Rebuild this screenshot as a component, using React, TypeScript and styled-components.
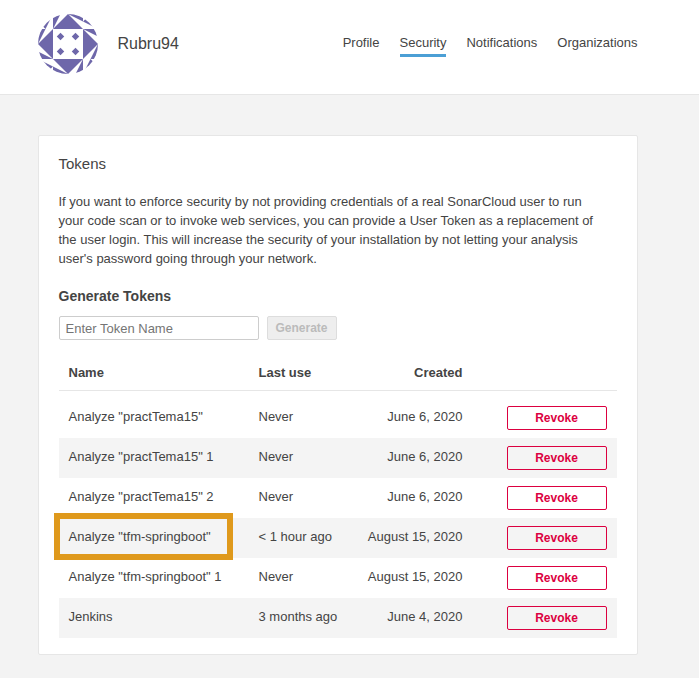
import React from "react";
import styled, { createGlobalStyle } from "styled-components";

const GlobalStyle = createGlobalStyle`
  *, *::before, *::after { box-sizing: border-box; }
  body {
    margin: 0;
    min-height: 100vh;
    background: #f3f3f3;
    color: #444;
    font: 13px/19px "Liberation Sans", Arial, sans-serif;
  }
`;

const Header = styled.header`
  display: flex;
  align-items: flex-start;
  height: 95px;
  padding: 14px 61.5px 0 37.5px;
  background: #fff;
  border-bottom: 1px solid #e6e6e6;
`;

const AvatarSvg = styled.svg`
  display: block;
  width: 60px;
  height: 60px;
  margin-left: 0.5px;
  margin-right: -0.5px;
  border-radius: 50%;
`;

const UserName = styled.h1`
  margin: 18px 0 0 20px;
  font-size: 16px;
  line-height: 24px;
  font-weight: 400;
`;

const Nav = styled.nav`
  display: flex;
  gap: 20px;
  margin: 20px 0 0 auto;
`;

const NavItem = styled.a<{ $active?: boolean }>`
  height: 23px;
  line-height: 17px;
  border-bottom: 3px solid ${(p) => (p.$active ? "#4b9fd5" : "transparent")};
`;

const Card = styled.main`
  width: 600px;
  height: 520px;
  margin: 40px 0 0 37.5px;
  padding: 18px 20px 0;
  background: #fff;
  border: 1px solid #e6e6e6;
  border-radius: 2px;
`;

const Title = styled.h2`
  margin: 0;
  font-size: 15px;
  line-height: 20px;
  font-weight: 400;
`;

const Description = styled.p`
  margin: 18px 0 0;
  width: 540px;
`;

const Subtitle = styled.h3`
  margin: 18px 0 0;
  font-size: 14px;
  line-height: 20px;
  font-weight: 700;
`;

const Form = styled.form`
  display: flex;
  gap: 8px;
  margin-top: 10px;
`;

const TokenInput = styled.input`
  width: 200px;
  height: 24px;
  padding: 1px 6px 0;
  border: 1px solid #cdcdcd;
  border-radius: 2px;
  font: 13px "Liberation Sans", Arial, sans-serif;
  &::placeholder { color: #757575; }
`;

const Button = styled.button<{ $danger?: boolean }>`
  width: ${(p) => (p.$danger ? "100px" : "70px")};
  height: 24px;
  padding: 0;
  border: 1px solid ${(p) => (p.$danger ? "#dc0040" : "#ddd")};
  border-radius: 2px;
  background: ${(p) => (p.$danger ? "transparent" : "#eee")};
  color: ${(p) => (p.$danger ? "#dc0040" : "#bbb")};
  font: bold 12px/22px "Liberation Sans", Arial, sans-serif;
`;

const Table = styled.table`
  width: 558px;
  margin-top: 15px;
  table-layout: fixed;
  border-collapse: separate;
  border-spacing: 0;
`;

const Th = styled.th<{ $width: number; $right?: boolean }>`
  width: ${(p) => p.$width}px;
  height: 36px;
  padding: 0 10px;
  border-bottom: 1px solid #e6e6e6;
  text-align: ${(p) => (p.$right ? "right" : "left")};
`;

const Spacer = styled.tr`
  height: 7px;
  td { padding: 0; }
`;

const Row = styled.tr<{ $striped: boolean }>`
  background: ${(p) => (p.$striped ? "#f4f4f4" : "transparent")};
`;

const Td = styled.td<{ $right?: boolean }>`
  height: 40px;
  padding: 9px 10px 7px;
  vertical-align: top;
  white-space: nowrap;
  text-align: ${(p) => (p.$right ? "right" : "left")};
`;

const ActionTd = styled(Td)`
  padding: 8px 10px;
  ${Button} { display: block; margin-left: auto; }
`;

const Highlighted = styled.span`
  position: relative;
  &::after {
    content: "";
    position: absolute;
    left: -14.5px;
    top: -16px;
    width: 179px;
    height: 47px;
    border: 6px solid #df991c;
    pointer-events: none;
  }
`;

const tokens = [
  { name: 'Analyze "practTema15"', used: "Never", created: "June 6, 2020" },
  { name: 'Analyze "practTema15" 1', used: "Never", created: "June 6, 2020" },
  { name: 'Analyze "practTema15" 2', used: "Never", created: "June 6, 2020" },
  { name: 'Analyze "tfm-springboot"', used: "< 1 hour ago", created: "August 15, 2020", marked: true },
  { name: 'Analyze "tfm-springboot" 1', used: "Never", created: "August 15, 2020" },
  { name: "Jenkins", used: "3 months ago", created: "June 4, 2020" },
];

const Avatar = () => (
  <AvatarSvg viewBox="0 0 60 60" fill="#6e67aa">
    <path d="M30 0 60 30 30 60 0 30Z" />
    <path fill="#fff" d="M15 15h30v30H15z" />
    {[22.5, 37.5].map((x) =>
      [22.5, 37.5].map((y) => (
        <path key={`${x}-${y}`} d={`M${x} ${y - 3.75}l3.75 3.75-3.75 3.75-3.75-3.75z`} />
      ))
    )}
    {[0, 90, 180, 270].map((a) => (
      <path
        key={a}
        transform={`rotate(${a} 30 30)`}
        d="M45 15 60 15 60 22.5ZM30 0 45 0 45 7.5ZM45 7.5 52.5 0 60 15Z"
      />
    ))}
  </AvatarSvg>
);

export default function App() {
  return (
    <>
      <GlobalStyle />
      <Header>
        <Avatar />
        <UserName>Rubru94</UserName>
        <Nav>
          <NavItem>Profile</NavItem>
          <NavItem $active>Security</NavItem>
          <NavItem>Notifications</NavItem>
          <NavItem>Organizations</NavItem>
        </Nav>
      </Header>
      <Card>
        <Title>Tokens</Title>
        <Description>
          If you want to enforce security by not providing credentials of a real SonarCloud user to run
          your code scan or to invoke web services, you can provide a User Token as a replacement of
          the user login. This will increase the security of your installation by not letting your analysis
          user's password going through your network.
        </Description>
        <Subtitle>Generate Tokens</Subtitle>
        <Form>
          <TokenInput placeholder="Enter Token Name" />
          <Button type="button" disabled>Generate</Button>
        </Form>
        <Table>
          <thead>
            <tr>
              <Th $width={190}>Name</Th>
              <Th $width={104}>Last use</Th>
              <Th $width={120} $right>Created</Th>
              <Th $width={144} />
            </tr>
          </thead>
          <tbody>
            <Spacer><td colSpan={4} /></Spacer>
            {tokens.map((t, i) => (
              <Row key={t.name} $striped={i % 2 === 1}>
                <Td>{t.marked ? <Highlighted>{t.name}</Highlighted> : t.name}</Td>
                <Td>{t.used}</Td>
                <Td $right>{t.created}</Td>
                <ActionTd>
                  <Button type="button" $danger>Revoke</Button>
                </ActionTd>
              </Row>
            ))}
          </tbody>
        </Table>
      </Card>
    </>
  );
}
